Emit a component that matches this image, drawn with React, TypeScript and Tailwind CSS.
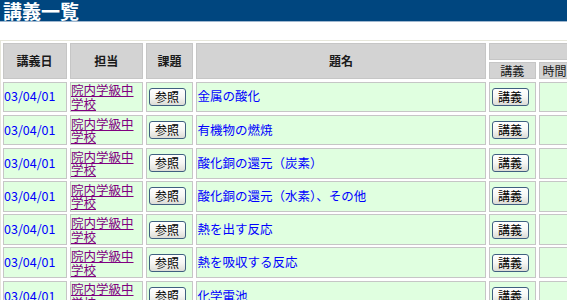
const lectures = [
  '金属の酸化',
  '有機物の燃焼',
  '酸化銅の還元（炭素）',
  '酸化銅の還元（水素）、その他',
  '熱を出す反応',
  '熱を吸収する反応',
  '化学電池',
];

function OldButton({ label }: { label: string }) {
  return (
    <button className="ml-[1.5px] h-[18px] w-[37px] rounded-[3px] border border-[#3f5f80] bg-gradient-to-b from-white via-[#f6f6f4] to-[#dcdcd6] text-[12px] leading-[16px] text-black">
      {label}
    </button>
  );
}

const head = 'flex items-center justify-center border border-[#c6c6c6] bg-[#d3d3d3] text-[12px] text-[#1a1a1a]';
const cell = 'flex items-center border border-[#c6c6c6] bg-[#e0ffe0]';

export default function App() {
  return (
    <div className="h-[300px] w-[567px] overflow-hidden bg-white font-['Noto_Sans_CJK_JP',sans-serif]">
      <div className="h-[22px] border-b border-[#9fb7cf] bg-[#00467f] pl-[3px] text-[19px] font-bold leading-[21px] text-white">
        講義一覧
      </div>

      <div className="mt-[18px] w-[600px] border border-[#e6e6da] p-[1.5px]">
        <div className="grid grid-cols-[64px_73.5px_47px_290px_46.5px_32px_40px] grid-rows-[17px_17px_repeat(7,30.7px)] gap-x-[3px] gap-y-[2.5px]">
          <div className={`${head} row-span-2 font-bold`}>講義日</div>
          <div className={`${head} row-span-2 font-bold`}>担当</div>
          <div className={`${head} row-span-2 font-bold`}>課題</div>
          <div className={`${head} row-span-2 font-bold`}>題名</div>
          <div className={`${head} col-span-3`} />
          <div className={head}>講義</div>
          <div className={head}>時間</div>
          <div className={head}>資料</div>

          {lectures.map((title) => (
            <div key={title} className="contents">
              <div className={`${cell} pl-[0.5px] text-[12.5px] text-[#0000ff]`}>03/04/01</div>
              <div className={`${cell} pl-[0.5px] text-[12.5px] leading-[13.5px]`}>
                <a href="#" className="text-[#800080] underline">院内学級中学校</a>
              </div>
              <div className={cell}>
                <OldButton label="参照" />
              </div>
              <div className={`${cell} pl-[0.5px] text-[12.5px] text-[#0000ff]`}>{title}</div>
              <div className={cell}>
                <OldButton label="講義" />
              </div>
              <div className={cell} />
              <div className={cell} />
            </div>
          ))}
        </div>
      </div>
    </div>
  );
}
